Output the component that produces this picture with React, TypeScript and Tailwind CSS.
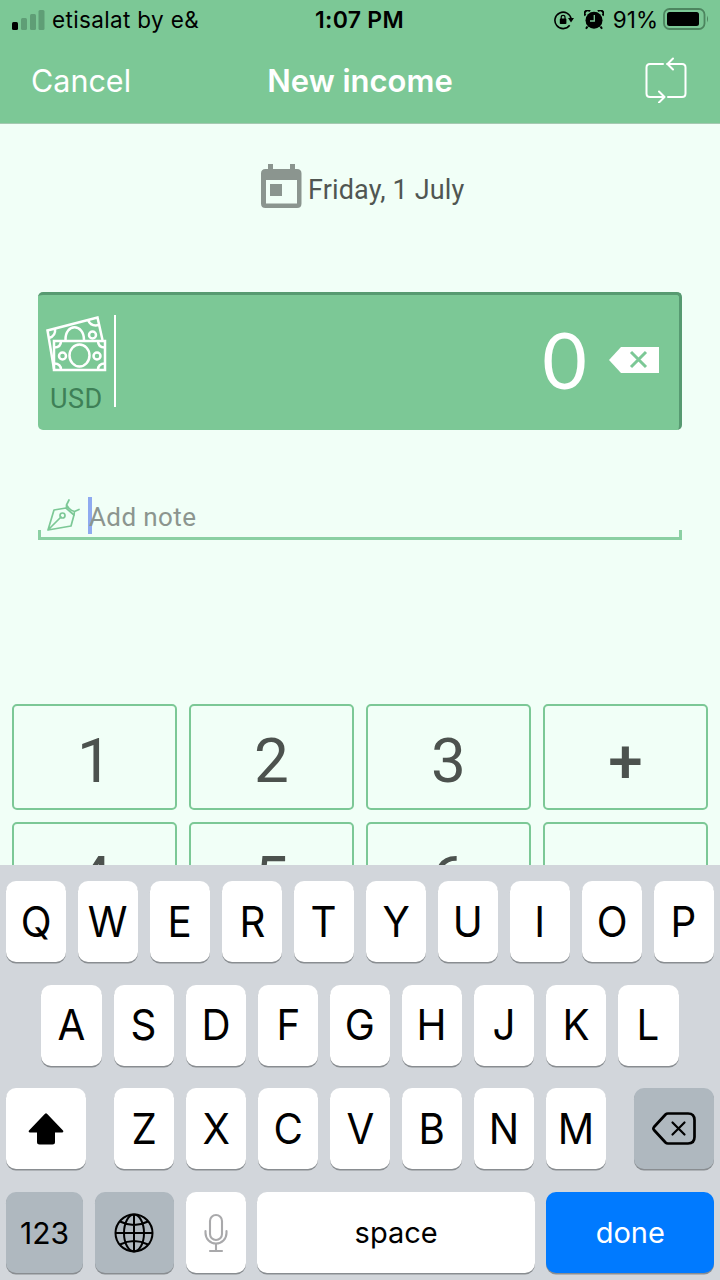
import React from "react";

const UI = "font-['Inter',sans-serif]";
const key =
  "flex items-center justify-center rounded-[10px] shadow-[0_1.5px_0_#898d91] h-[81px]";

function Letter({ c }: { c: string }) {
  return (
    <div className={`${key} w-[60.400px] shrink-0 bg-white text-[42px] leading-none text-black`}>
      <span className="inline-block scale-x-[0.96]">{c}</span>
    </div>
  );
}

function StatusBar() {
  return (
    <div className="relative flex h-[40px] items-center justify-between pl-3 pr-[10px] text-black">
      <div className="flex items-center">
        <svg width="33" height="20" viewBox="0 0 33 20">
          <rect x="0" y="12" width="6" height="8" rx="1.5" fill="#000" />
          <g fill="#5f9e76">
            <rect x="9" y="8" width="6" height="12" rx="1.5" />
            <rect x="18" y="4" width="6" height="16" rx="1.5" />
            <rect x="26.500" y="0" width="6" height="20" rx="1.500" />
          </g>
        </svg>
        <span className="ml-[7px] text-[22.500px] tracking-[0.350px]">etisalat by e&amp;</span>
      </div>
      <span className="absolute left-[315px] top-[7px] text-[23px] leading-[26px] font-semibold tracking-[0.300px]">
        1:07 PM
      </span>
      <div className="flex items-center">
        <svg width="20" height="20" viewBox="0 0 20 20" className="mr-[10px]">
          <path d="M15.700 15.300A8.200 8.200 0 1 1 17.200 9" fill="none" stroke="#000" strokeWidth="1.600" />
          <path d="M14 8h6l-3 4.500z" />
          <rect x="5.800" y="8.600" width="6.600" height="5.400" rx="0.800" />
          <path d="M7.200 9V7.300a1.900 1.900 0 0 1 3.800 0V9" fill="none" stroke="#000" strokeWidth="1.200" />
        </svg>
        <svg width="20" height="20" viewBox="0 0 20 20" className="mr-[9px]">
          <circle cx="10" cy="10.300" r="8.500" />
          <path d="M1.500 5.500A3 3 0 0 1 6 1.300M14 1.300a3 3 0 0 1 4.500 4.200M3.500 16.500 2 18.800M16.500 16.500l1.500 2.300" stroke="#000" strokeWidth="2" fill="none" />
          <path d="M10.300 5v6H6" fill="none" stroke="#7cc896" strokeWidth="1.300" />
        </svg>
        <span className="text-[22.500px]">91%</span>
        <svg width="47" height="22" viewBox="0 0 47 22" className="ml-[5px] -mt-[2px]">
          <rect x="1" y="1" width="40.500" height="20" rx="5.500" fill="none" stroke="#4d855f" strokeWidth="1.800" />
          <rect x="4" y="4" width="32" height="14" rx="2.500" />
          <path d="M44 7.500q2 3.500 0 7z" fill="#4d855f" />
        </svg>
      </div>
    </div>
  );
}

function Bills() {
  return (
    <svg width="61" height="56" viewBox="0 0 61 56" fill="none" stroke="#fff" strokeWidth="2.500">
      <path d="M8 53 1.500 14.500 51.500 1.500 56.500 24" />
      <path d="M3 22q7-2 6-9.500M42 4q3 7 11 5" />
      <path d="M19.500 24C19 7 38 7 38 24" />
      <circle cx="46.500" cy="19" r="3.500" />
      <rect x="8" y="25" width="51" height="29" />
      <path d="M8 31.500q7 0 7-6.500M52 25q0 6.500 7 6.500M59 47.500q-7 0-7 6.500M15 54q0-6.500-7-6.500" />
      <ellipse cx="33.500" cy="39.500" rx="10" ry="11" />
      <circle cx="16.500" cy="40" r="3.500" />
      <circle cx="51" cy="40" r="3.500" />
    </svg>
  );
}

function Pad({ c }: { c: string }) {
  return (
    <div className="flex h-[106px] items-center justify-center rounded-[5px] border-2 border-[#7cc896] pt-[7px] text-[62px] leading-none text-[#4c524e]">
      <span className={c === "+" ? "font-medium" : ""}>{c}</span>
    </div>
  );
}

function Keyboard() {
  return (
    <div className={`${UI} flex h-[415px] shrink-0 flex-col gap-[22.700px] bg-[#d2d6db] px-[6px] pt-[16px]`}>
      <div className="flex justify-between">
        {"QWERTYUIOP".split("").map((c) => <Letter key={c} c={c} />)}
      </div>
      <div className="flex justify-center gap-[11.700px]">
        {"ASDFGHJKL".split("").map((c) => <Letter key={c} c={c} />)}
      </div>
      <div className="flex justify-between">
        <div className={`${key} w-[80px] bg-white`}>
          <svg width="36" height="32" viewBox="0 0 36 32">
            <path d="M17 .8q1-1 2 0L35 17.500q1 2-1 2h-7V29q0 2.500-2.500 2.500h-13Q9 31.500 9 29v-9.500H2q-2 0-1-2z" />
          </svg>
        </div>
        <div className="flex gap-[11.700px]">
          {"ZXCVBNM".split("").map((c) => <Letter key={c} c={c} />)}
        </div>
        <div className={`${key} w-[80px] bg-[#afb8bf]`}>
          <svg width="44" height="33" viewBox="0 0 44 33" fill="none" stroke="#000" strokeWidth="2.700" strokeLinejoin="round" strokeLinecap="round">
            <path d="M16 1.500h20q6.500 0 6.500 6.500v17q0 6.500-6.500 6.500H16q-1.500 0-2.500-1L2 18q-1.200-1.500 0-3L13.500 2.500q1-1 2.500-1z" />
            <path d="m20.500 10.500 12 12M32.500 10.500l-12 12" strokeWidth="2.200" />
          </svg>
        </div>
      </div>
      <div className="flex text-[29px] text-black">
        <div className={`${key} mr-3 w-[77px] bg-[#afb8bf] pt-[2px] text-[30px]`}>123</div>
        <div className={`${key} mr-3 w-[78.500px] bg-[#afb8bf]`}>
          <svg width="40" height="40" viewBox="0 0 40 40" fill="none" stroke="#000" strokeWidth="2">
            <circle cx="20" cy="20" r="18.500" />
            <ellipse cx="20" cy="20" rx="10" ry="18.500" />
            <path d="M20 1.500v37M1.500 20h37M6 8.500q14 7 28 0M6 31.500q14-7 28 0" />
          </svg>
        </div>
        <div className={`${key} mr-[11.500px] w-[60.400px] bg-white`}>
          <svg width="24" height="40" viewBox="0 0 24 40" fill="none" stroke="#a9a9ab" strokeWidth="2.100" strokeLinecap="round">
            <rect x="6" y="2" width="12" height="25" rx="6" />
            <path d="M1.500 18v2a10.500 10.500 0 0 0 21 0v-2M12 31v7M6 38h12" />
          </svg>
        </div>
        <div className={`${key} mr-[11.600px] w-[277.500px] bg-white`}>space</div>
        <div className={`${key} w-[167.500px] bg-[#007aff] text-white`}>done</div>
      </div>
    </div>
  );
}

export default function App() {
  return (
    <div className="flex h-[1280px] w-[720px] flex-col overflow-hidden bg-[#f1fff7] font-['Roboto',sans-serif]">
      <header className={`${UI} h-[124px] shrink-0 border-b border-[#a5c9b1] bg-[#7cc896]`}>
        <StatusBar />
        <div className="relative flex h-[80px] items-center justify-between pl-[31px] pr-[33px] text-white">
          <span className="pt-px text-[30.500px]">Cancel</span>
          <h1 className="absolute left-0 w-full pt-[2px] text-center text-[31px] font-semibold">New income</h1>
          <svg width="42" height="46" viewBox="0 0 42 46" fill="none" stroke="#fff" strokeWidth="2" strokeLinecap="round" strokeLinejoin="round">
            <path d="M18 7H5Q1.500 7 1.500 10.500v26Q1.500 40 5 40h14M14 34.500l5.500 5.500-5.500 5.500" />
            <path d="M23 40h14q3.500 0 3.500-3.500v-26Q40.500 7 37 7H22M28 1.500 22.500 7l5.500 5.500" />
          </svg>
        </div>
      </header>

      <main className="flex h-[741px] shrink-0 flex-col overflow-hidden">
        <div className="ml-[261px] mt-[39px] flex h-[46px] shrink-0 items-center">
          <svg width="41" height="46" viewBox="0 0 41 46" fill="#8b958f">
            <path fillRule="evenodd" d="M7 1h5v5h17V1h5v5h2q4.500 0 4.500 4.500v30Q40.500 45 36 45H4.500Q0 45 0 40.500v-30Q0 6 4.500 6H7zM5 17v23.500h31V17z" />
            <rect x="9" y="21" width="12" height="12" />
          </svg>
          <span className="ml-[6px] mt-[7px] text-[27px] leading-8 tracking-[0.150px] text-[#505652]">Friday, 1 July</span>
        </div>

        <div className="mx-[38px] mt-[83px] flex h-[138px] shrink-0 rounded-[5px] border-r-[3px] border-t-[3px] border-[#579a71] bg-[#7cc896]">
          <div className="w-[76px] pl-2 pt-[21px]">
            <Bills />
            <div className="ml-[4px] mt-[11px] text-[27px] leading-8 tracking-[0.500px] text-[#3e8057]">USD</div>
          </div>
          <div className="mt-[20px] h-[92px] w-[2px] bg-white" />
          <div className="ml-auto flex items-center pr-[20px] text-white">
            <span className="-mt-[7px] mr-[22px] font-['Lato',sans-serif] text-[77px] leading-none">0</span>
            <svg width="50" height="26" viewBox="0 0 50 26" className="-mt-[5px]">
              <path d="M0 13 12 0h38v26H12z" fill="#fff" />
              <path d="m22 5 15 15M37 5 22 20" stroke="#7cc896" strokeWidth="3" />
            </svg>
          </div>
        </div>

        <div className="mx-[38px] mt-[67px] flex h-[44px] shrink-0 flex-col">
          <div className="flex h-[37px] shrink-0 items-center pl-[9px]">
            <svg width="33" height="33" viewBox="0 0 33 33" fill="none" stroke="#7cc896" strokeWidth="1.700" strokeLinejoin="round" strokeLinecap="round">
              <path d="M1 31 7 11l12-2 8 7-3 11zM1 31l13-13" />
              <circle cx="15.500" cy="16.500" r="2.500" />
              <path d="m22 1-2.500 5q3 5.500 8 6.500l4.500-2M19.500 6v3M27.500 12.500 27 16" />
            </svg>
            <div className="ml-[8px] h-[37px] w-[4px] bg-[#8faaf0]" />
            <span className="-ml-[3px] mt-[3px] text-[26px] leading-8 tracking-[0.400px] text-[#8c958f]">Add note</span>
          </div>
          <div className="-mt-[4px] h-[10px] shrink-0 border-x-[3px] border-b-[3px] border-[#8bd0a3]" />
        </div>

        <div className="mt-[163px] grid shrink-0 grid-cols-4 gap-3 pl-3 pr-[12px]">
          {["1", "2", "3", "+", "4", "5", "6", "-"].map((c) => <Pad key={c} c={c} />)}
        </div>
      </main>

      <Keyboard />
    </div>
  );
}
